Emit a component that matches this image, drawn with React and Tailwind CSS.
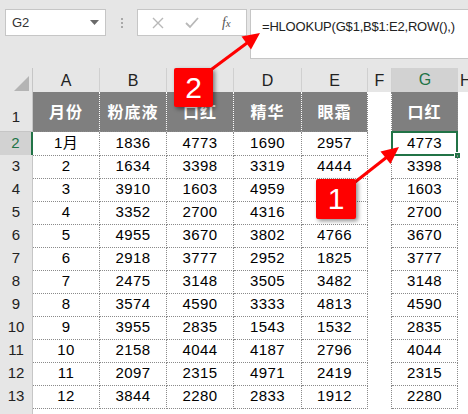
import React from "react";

const data = [
  ["1月", "1836", "4773", "1690", "2957", "4773"],
  ["2", "1634", "3398", "3319", "4444", "3398"],
  ["3", "3910", "1603", "4959", "", "1603"],
  ["4", "3352", "2700", "4316", "", "2700"],
  ["5", "4955", "3670", "3802", "4766", "3670"],
  ["6", "2918", "3777", "2952", "1825", "3777"],
  ["7", "2475", "3148", "3505", "3482", "3148"],
  ["8", "3574", "4590", "3333", "4813", "4590"],
  ["9", "3955", "2835", "1543", "1532", "2835"],
  ["10", "2158", "4044", "4187", "2796", "4044"],
  ["11", "2097", "2315", "4971", "2419", "2315"],
  ["12", "3844", "2280", "2833", "1912", "2280"],
];

const heads = ["月份", "粉底液", "口红", "精华", "眼霜"];
const letters = ["A", "B", "C", "D", "E", "F"];

const FONT = { fontFamily: '"Liberation Sans", "Noto Sans CJK SC", Arial, sans-serif' };
const CJK = { fontFamily: '"Noto Sans CJK SC", "Liberation Sans", sans-serif' };

const GRID = "grid grid-cols-[33px_67px_67px_67px_68px_66px_24px_66px_1fr]";

function RowHeader({ n, selected, tall }) {
  return (
    <div
      className={
        "flex justify-center text-[15px] border-b border-[#c6c6c6] " +
        (tall ? "items-end pb-[3px] " : "items-center ") +
        (selected
          ? "bg-[#d2d2d2] text-[#217346] border-r-2 border-r-[#217346]"
          : "bg-[#e6e6e6] text-[#222] border-r border-r-[#c6c6c6]")
      }
    >
      {n}
    </div>
  );
}

function Cell({ children, className = "" }) {
  return (
    <div
      className={
        "flex items-center justify-center text-[15px] tracking-[0.4px] text-black border-r border-b border-dotted border-[#8a8a8a] " +
        className
      }
    >
      {children}
    </div>
  );
}

export default function App() {
  return (
    <div className="w-[468px] h-[414px] overflow-hidden bg-white relative" style={FONT}>
      {/* toolbar */}
      <div className="h-[68px] bg-[#e6e6e6] flex items-start pt-[9px] pl-[5px]">
        <div className="w-[101px] h-[27px] bg-white border border-[#c6c6c6] flex items-center justify-between pl-[6px] pr-[6px]">
          <span className="text-[13px] text-[#333]">G2</span>
          <svg width="9" height="5" viewBox="0 0 9 5">
            <polygon points="0,0 9,0 4.5,5" fill="#6a6a6a" />
          </svg>
        </div>
        <div className="w-[31px] h-[27px] flex flex-col items-center justify-center gap-[2px]">
          <span className="w-[2px] h-[2px] bg-[#a8a8a8]" />
          <span className="w-[2px] h-[2px] bg-[#a8a8a8]" />
          <span className="w-[2px] h-[2px] bg-[#a8a8a8]" />
        </div>
        <div className="w-[110px] h-[27px] bg-white border border-[#c6c6c6] flex items-center">
          <div className="w-[40px] flex justify-center">
            <svg width="12" height="12" viewBox="0 0 12 12">
              <path d="M1 1 L11 11 M11 1 L1 11" stroke="#b8b8b8" strokeWidth="1.4" />
            </svg>
          </div>
          <div className="w-[30px] flex justify-center">
            <svg width="14" height="12" viewBox="0 0 14 12">
              <path d="M1 6 L5 10 L13 1" stroke="#b8b8b8" strokeWidth="1.8" fill="none" />
            </svg>
          </div>
          <div className="w-[40px] flex justify-center">
            <span
              className="text-[14px] italic text-[#555]"
              style={{ fontFamily: '"Liberation Serif", serif' }}
            >
              f<span className="text-[11px]">x</span>
            </span>
          </div>
        </div>
        <div className="flex-1 ml-[3px] -mr-[4px] h-[50px] bg-white border border-[#c6c6c6] pl-[11px] pt-[4px]">
          <span className="text-[13px] text-[#222] tracking-[-0.2px]">=HLOOKUP(G$1,B$1:E2,ROW(),)</span>
        </div>
      </div>

      {/* column headers */}
      <div className={GRID + " h-[24px] bg-[#e6e6e6]"}>
        <div className="border-r border-[#c6c6c6] flex items-end justify-end pr-[3px] pb-[3px]">
          <svg width="15" height="15" viewBox="0 0 15 15">
            <polygon points="15,0 15,15 0,15" fill="#b4b4b4" />
          </svg>
        </div>
        {letters.map((l) => (
          <div
            key={l}
            className="flex items-center justify-center text-[16px] text-[#222] border-r border-[#d0d0d0]"
          >
            {l}
          </div>
        ))}
        <div className="flex items-center justify-center text-[16px] text-[#217346] bg-[#d2d2d2] border-b-2 border-[#217346]">
          G
        </div>
        <div className="flex items-center pl-[2px] text-[16px] text-[#222]">H</div>
      </div>

      {/* row 1 */}
      <div className={GRID + " h-[40px]"}>
        <RowHeader n="1" tall />
        {heads.map((h) => (
          <div
            key={h}
            className="bg-[#7f7f7f] flex items-center justify-center pb-[2px] text-white font-bold text-[16px] tracking-[1px] border-r border-dotted border-r-white border-b border-b-[#8a8a8a]"
            style={CJK}
          >
            {h}
          </div>
        ))}
        <div className="border-r border-dotted border-[#8a8a8a]" />
        <div
          className="bg-[#7f7f7f] flex items-center justify-center pb-[2px] text-white font-bold text-[16px] tracking-[1px] border-r border-dotted border-r-[#8a8a8a] border-b border-b-[#8a8a8a]"
          style={CJK}
        >
          口红
        </div>
        <div />
      </div>

      {/* data rows */}
      {data.map((r, i) => (
        <div key={i} className={GRID + " h-[23px]"}>
          <RowHeader n={String(i + 2)} selected={i === 0} />
          {r.slice(0, 5).map((v, j) => (
            <Cell key={j}>{v}</Cell>
          ))}
          <div className="border-r border-dotted border-[#8a8a8a]" />
          <Cell className="relative">
            {r[5]}
            {i === 0 && (
              <>
                <div className="absolute -left-[1px] -top-[1px] -right-[1px] -bottom-[1px] border-2 border-[#217346]" />
                <div className="absolute -right-[4px] -bottom-[4px] w-[7px] h-[7px] bg-[#217346] border border-white" />
              </>
            )}
          </Cell>
          <div />
        </div>
      ))}

      {/* row 14 (only its top edge is visible) */}
      <div className={GRID + " h-[23px]"}>
        <RowHeader n="" />
      </div>

      {/* arrows */}
      <svg className="absolute left-0 top-0 pointer-events-none" width="468" height="414">
        <line x1="208" y1="72" x2="247" y2="43" stroke="#ff0000" strokeWidth="3" />
        <polygon points="260,33 251,49.5 241.5,36.5" fill="#ff0000" />
        <line x1="350" y1="186" x2="387" y2="157" stroke="#ff0000" strokeWidth="3" />
        <polygon points="399,147 390.5,164 380.5,151.5" fill="#ff0000" />
      </svg>

      {/* badges */}
      <div className="absolute left-[174px] top-[68px] w-[39px] h-[39px] bg-[#ff0000] rounded-[2px] shadow-[2px_2px_4px_rgba(0,0,0,0.45)] flex items-center justify-center text-white text-[30px] leading-none">
        2
      </div>
      <div className="absolute left-[316px] top-[179px] w-[40px] h-[40px] bg-[#ff0000] rounded-[2px] shadow-[2px_2px_4px_rgba(0,0,0,0.45)] flex items-center justify-center text-white text-[30px] leading-none">
        1
      </div>
    </div>
  );
}
